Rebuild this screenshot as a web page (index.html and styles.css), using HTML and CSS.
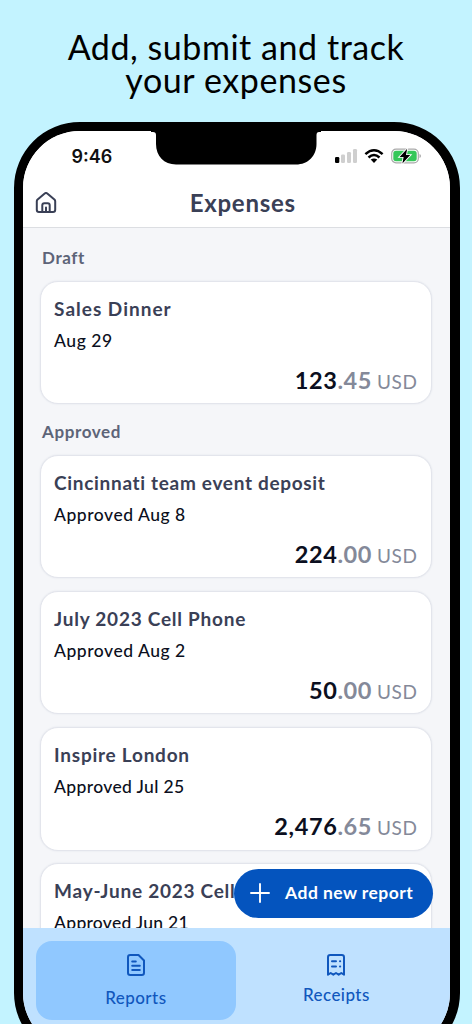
FILE: index.html
```html
<!DOCTYPE html>
<html lang="en">
<head>
<meta charset="utf-8">
<title>Expenses</title>
<link rel="stylesheet" href="styles.css">
</head>
<body>
<h1 class="headline"><span class="headline-a">Add, submit and track</span><br><span class="headline-b">your expenses</span></h1>
<div class="phone">
  <svg class="notch" width="170" height="34" viewBox="0 0 170 34"><path d="M0 0H170V1H168Q165.500 1 165.500 4V13C165.500 25 157 33.500 145 33.500H25C13 33.500 5 25 5 13V4Q5 1 2 1H0Z"/></svg>
  <header class="top">
    <div class="status">
      <span class="time">9:46</span>
      <div class="signals">
        <svg width="23" height="16" viewBox="0 0 23 16"><rect x="0" y="9" width="4.300" height="6" rx="1.200"/><g fill="#cfcfcf"><rect x="6" y="6.500" width="4" height="8.500" rx="1.200"/><rect x="12" y="4" width="4" height="11" rx="1.200"/><rect x="18" y="1" width="4" height="14" rx="1.200"/></g></svg>
        <svg class="wifi" width="20" height="16" viewBox="0 0 20 16"><g fill="none" stroke="#000" stroke-width="2.500"><path d="M1.400 6.100Q10 -1.600 18.600 6.100"/><path d="M4.500 9.500Q10 4.600 15.500 9.500"/></g><path d="M6.700 11.600Q10 9.200 13.300 11.600L10 15Z"/></svg>
        <svg class="battery" width="31" height="16" viewBox="0 0 31 16"><rect x=".7" y="1.200" width="26.600" height="13.600" rx="4.300" fill="#fff" stroke="#aaa" stroke-width="1.200"/><rect x="2.300" y="2.800" width="23.400" height="10.400" rx="2.700" fill="#35c759"/><path d="M28.500 6V10Q30 9.500 30 8Q30 6.500 28.500 6Z" fill="#aaa"/><path d="M16.200 .8L8.600 8.900H12.600L11.400 15.400L19.200 7.100H15Z" stroke="#fff" stroke-width="1.800" paint-order="stroke"/></svg>
      </div>
    </div>
    <div class="titlebar">
      <svg class="home" width="22" height="22" viewBox="0 0 22 22" fill="none" stroke="#3a4056" stroke-width="2" stroke-linejoin="round" stroke-linecap="round"><path d="M1.800 9.300Q1.800 8.300 2.600 7.600L9.700 1.500Q11 .5 12.300 1.500L19.400 7.600Q20.200 8.300 20.200 9.300V17.700Q20.200 20 18 20H4Q1.800 20 1.800 17.700Z"/><path d="M7.300 20V13.300Q7.300 11.300 9.300 11.300H12.700Q14.700 11.300 14.700 13.300V20M11 15.500V20"/></svg>
      <h2 class="title">Expenses</h2>
    </div>
  </header>
  <main class="list">
    <h3 class="section draft">Draft</h3>
    <article class="card"><h4 class="name n1">Sales Dinner</h4><p class="date">Aug 29</p><p class="amount"><b>123</b><b class="cents">.45</b><span class="currency">USD</span></p></article>
    <h3 class="section approved">Approved</h3>
    <article class="card"><h4 class="name n2">Cincinnati team event deposit</h4><p class="date">Approved Aug 8</p><p class="amount"><b>224</b><b class="cents">.00</b><span class="currency">USD</span></p></article>
    <article class="card"><h4 class="name">July 2023 Cell Phone</h4><p class="date">Approved Aug 2</p><p class="amount"><b>50</b><b class="cents">.00</b><span class="currency">USD</span></p></article>
    <article class="card"><h4 class="name">Inspire London</h4><p class="date d4">Approved Jul 25</p><p class="amount"><b>2,476</b><b class="cents">.65</b><span class="currency">USD</span></p></article>
    <article class="card"><h4 class="name">May-June 2023 Cell</h4><p class="date d5">Approved Jun 21</p></article>
    <button class="add"><svg width="20" height="20" viewBox="0 0 20 20" stroke="#fff" stroke-width="1.900" stroke-linecap="round"><path d="M10 1V19M1 10H19"/></svg><span>Add new report</span></button>
  </main>
  <nav class="tabs">
    <div class="tab active">
      <svg width="20" height="24" viewBox="0 0 20 24" fill="none" stroke="#1057bd" stroke-width="2" stroke-linecap="round" stroke-linejoin="round"><path d="M4.200 2H12.500L18 7.500V19.800Q18 22 15.800 22H4.200Q2 22 2 19.800V4.200Q2 2 4.200 2Z"/><path d="M6.200 8.500H9.800M6.200 12.800H13.800M6.200 17H13.800"/></svg>
      <span class="reports">Reports</span>
    </div>
    <div class="tab">
      <svg width="20" height="24" viewBox="0 0 20 24" fill="none" stroke="#1057bd" stroke-width="2" stroke-linecap="round" stroke-linejoin="round"><path d="M2 21.700V4.200Q2 2 4.200 2H15.800Q18 2 18 4.200V21.700L15.300 20L12.700 21.700L10 20L7.300 21.700L4.700 20Z"/><path d="M6 8.300H10M6 13.500H10M14 8.300H14.200M14 13.500H14.200"/></svg>
      <span class="receipts">Receipts</span>
    </div>
  </nav>
</div>
</body>
</html>
```
FILE: styles.css
```css
* { box-sizing: border-box; }
body { margin: 0; height: 1024px; overflow: hidden; background: #c3f3ff; font-family: Lato, "Open Sans", sans-serif; color: #0b0f20; }
h1, h2, h3, h4, p { margin: 0; white-space: nowrap; }
.headline { height: 122px; padding-top: 30px; text-align: center; font-size: 34px; line-height: 33px; font-weight: 400; color: #000; }
.headline-a { letter-spacing: .55px; }
.headline-b { letter-spacing: .6px; }
.phone { position: relative; width: 446px; height: 937px; margin-left: 13.600px; border: 9px solid #000; border-right-width: 10px; border-radius: 66px; overflow: hidden; background: #f5f6f9; display: flex; flex-direction: column; }
.notch { position: absolute; left: 128.400px; top: -.4px; }
.top { height: 96.500px; background: #fff; border-bottom: 1.500px solid #dcdee2; }
.status { display: flex; justify-content: space-between; padding: 14px 28px 0 49px; height: 48px; }
.time { font: 600 18px/24px Inter, sans-serif; color: #111; }
.signals { display: flex; padding-top: 2.500px; }
.wifi { margin-left: 5.500px; }
.battery { margin-left: 7px; }
.titlebar { display: grid; grid-template-columns: 22px 1fr 22px; padding: 11px 12.500px 0 12.800px; }
.home { margin-top: 2px; }
.title { text-align: center; font-size: 24px; line-height: 26px; font-weight: 700; letter-spacing: .75px; color: #3a4056; padding-left: 13px; }
.list { height: 700.500px; padding: 0 17.500px; overflow: hidden; position: relative; }
.section { font-size: 17px; line-height: 22px; font-weight: 700; letter-spacing: .6px; color: #5d6478; padding-left: 2px; }
.draft { padding-top: 19px; height: 53px; }
.approved { padding-top: 17px; height: 51px; margin-top: -13px; }
.card { height: 123.500px; margin-bottom: 12.700px; border: 1px solid #e3e5ec; box-shadow: 0 0 2px #dfe2ea; border-radius: 18px; background: #fff; padding: 14px 13.500px 0 13px; display: flex; flex-direction: column; }
.name { font-size: 19px; line-height: 25px; font-weight: 700; letter-spacing: .75px; color: #3a4056; }
.n1 { letter-spacing: 1px; }
.n2 { letter-spacing: .68px; }
.date { font-size: 17.500px; line-height: 26px; margin-top: 7px; font-weight: 500; letter-spacing: .52px; }
.d4 { letter-spacing: .36px; }
.d5 { letter-spacing: .28px; }
.amount { display: flex; align-items: baseline; justify-content: flex-end; font-size: 23.500px; line-height: 28px; margin-top: 12px; letter-spacing: .6px; }
.cents { color: #848999; }
.currency { font-size: 19px; color: #848999; margin-left: 5px; }
.add { position: absolute; left: 211.500px; top: 641.500px; width: 199px; height: 48.500px; border: 0; border-radius: 25px; background: #0454be; color: #fff; display: flex; align-items: center; gap: 15px; padding: 0 16px; font: 700 17.500px/24px Lato, sans-serif; letter-spacing: .45px; white-space: nowrap; }
.tabs { flex: 1; background: #bfe1ff; display: flex; padding: 12.500px 13px 0; }
.tab { width: 200.500px; height: 79px; display: flex; flex-direction: column; align-items: center; padding-top: 12px; border-radius: 16px; color: #1057bd; font-size: 17px; line-height: 22px; font-weight: 500; letter-spacing: .45px; gap: 10px; }
.active { background: #90c8ff; }
.receipts { margin-top: -3px; }
```
